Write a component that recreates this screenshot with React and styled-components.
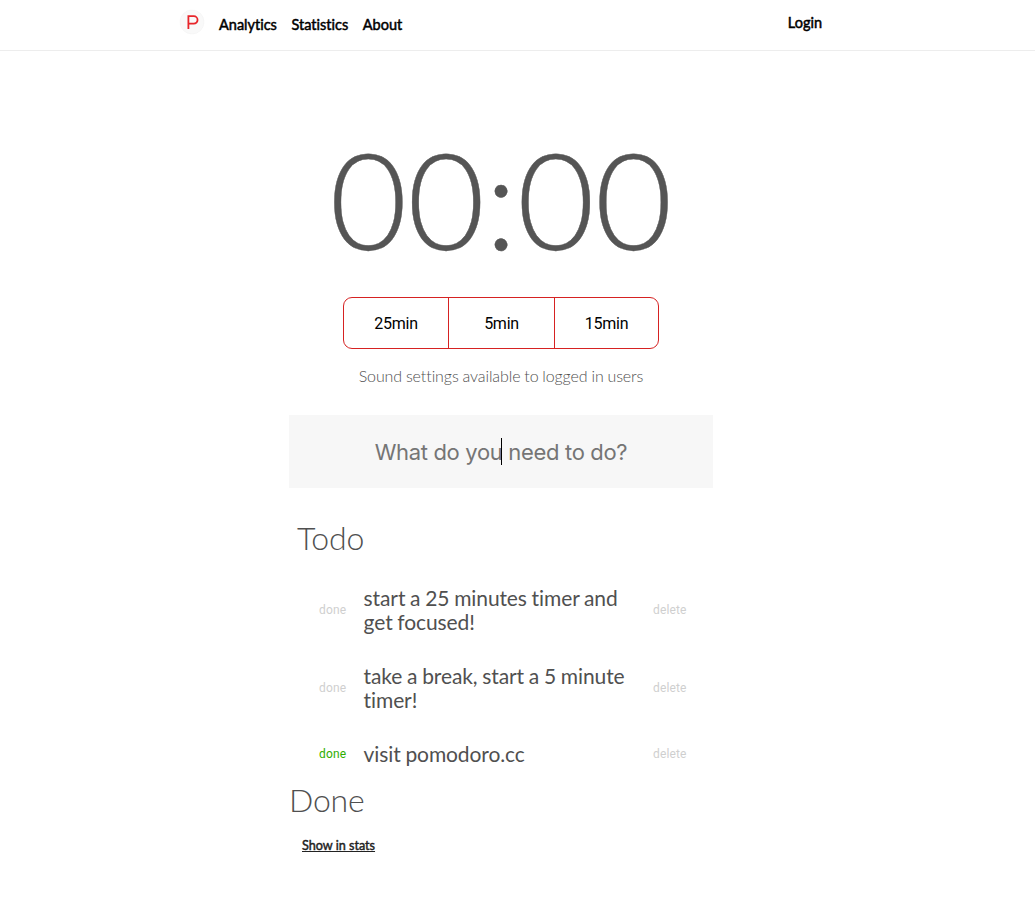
import React from 'react';
import styled, { createGlobalStyle } from 'styled-components';

const Global = createGlobalStyle`
  * { box-sizing: border-box; }
  body {
    margin: 0; background: #fff; color: #505050; font-family: Lato, sans-serif;
    font-variant-ligatures: none; -webkit-font-smoothing: antialiased;
  }
`;
const Header = styled.header`
  height: 51px; border-bottom: 1px solid #ededed;
  display: flex; padding: 0 213px 0 179px; justify-content: space-between;
`;
const Nav = styled.nav`display: flex;`;
const Logo = styled.svg`width: 26px; height: 26px; margin: 9px 14px 0 0;`;
const NavLink = styled.a`
  font-size: 14.5px; line-height: 20px; font-weight: 400; color: #000; -webkit-text-stroke: 0.5px #000;
  margin-top: ${p => p.$top || 15}px; margin-right: ${p => p.$gap || 0}px;
`;
const Main = styled.main`width: 424px; margin: 0 0 0 289px;`;
const Timer = styled.div`
  font-size: 134px; line-height: 160px; font-weight: 300; text-align: center; white-space: nowrap;
  padding-top: 68px; height: 246px; color: #555; -webkit-text-stroke: 0.4px #555;
`;
const Buttons = styled.div`
  width: 316px; height: 52px; margin: 0 auto; display: grid; grid-template-columns: 104px 106px 104px;
  border: 1px solid #d62222; border-radius: 9px;
`;
const TimeButton = styled.button`
  border: 0; background: none; padding: 0; color: #000;
  font: 400 16px Roboto, sans-serif; letter-spacing: -0.25px;
  & + & { border-left: 1px solid #d62222; }
`;
const Notice = styled.p`
  margin: 17px 0 0; font-size: 16px; line-height: 20px; font-weight: 300; text-align: center;
  letter-spacing: -0.09px; word-spacing: -0.4px;
`;
const Entry = styled.div`
  margin-top: 29px; height: 73px; background: #f7f7f7; color: #757575; position: relative;
  font: 400 22px/75px Inter, sans-serif; letter-spacing: -0.33px; text-align: center;
`;
const Caret = styled.i`
  position: absolute; left: 212px; top: 23px; width: 1px; height: 27px; background: #000;
`;
const Title = styled.h2`
  margin: ${p => p.$top}px 0 0 ${p => p.$left || 0}px; font-size: 32px; line-height: 40px; font-weight: 300;
  letter-spacing: -0.2px;
`;
const Item = styled.div`
  display: flex; align-items: center; margin-top: ${p => p.$top || 30}px; padding-left: 30px;
`;
const Action = styled.button`
  border: 0; padding: 0; background: none; text-align: left; width: 44px;
  font: 400 12px/16px Roboto, sans-serif; letter-spacing: 0.15px; color: ${p => (p.$active ? '#2fae00' : '#cfcfcf')};
`;
const Text = styled.div`
  width: 290px; padding: 0 14px 0 0.6px; font-size: 21px; line-height: 24px;
  letter-spacing: -0.1px; word-spacing: -0.5px;
`;
const Stats = styled.a`
  display: block; margin: 17px 0 0 13px; font-size: 12.6px; line-height: 18px; font-weight: 400;
  color: #222; -webkit-text-stroke: 0.45px #222; text-decoration: underline;
`;
const items = [
  { text: 'start a 25 minutes timer and get focused!', top: 28 },
  { text: 'take a break, start a 5 minute timer!' },
  { text: 'visit pomodoro.cc', active: true },
];

export default function App() {
  return (
    <>
      <Global />
      <Header>
        <Nav>
          <Logo viewBox="0 0 26 26">
            <circle cx="13" cy="13" r="12" fill="#f9f9f9" stroke="#f3f3f3" strokeWidth="0.6" />
            <path d="M9.4 20V7.2h5.4a3.75 3.75 0 0 1 0 7.5H9.4" fill="none" stroke="#e8252a" strokeWidth="1.8" />
          </Logo>
          <NavLink $gap={14.6}>Analytics</NavLink>
          <NavLink $gap={14.6}>Statistics</NavLink>
          <NavLink>About</NavLink>
        </Nav>
        <NavLink $top={13}>Login</NavLink>
      </Header>
      <Main>
        <Timer>00:00</Timer>
        <Buttons>
          <TimeButton>25min</TimeButton>
          <TimeButton>5min</TimeButton>
          <TimeButton>15min</TimeButton>
        </Buttons>
        <Notice>Sound settings available to logged in users</Notice>
        <Entry>What do you need to do?<Caret /></Entry>
        <Title $top={30} $left={8}>Todo</Title>
        {items.map(i => (
          <Item key={i.text} $top={i.top}>
            <Action $active={i.active}>done</Action>
            <Text>{i.text}</Text>
            <Action>delete</Action>
          </Item>
        ))}
        <Title $top={14}>Done</Title>
        <Stats>Show in stats</Stats>
      </Main>
    </>
  );
}
